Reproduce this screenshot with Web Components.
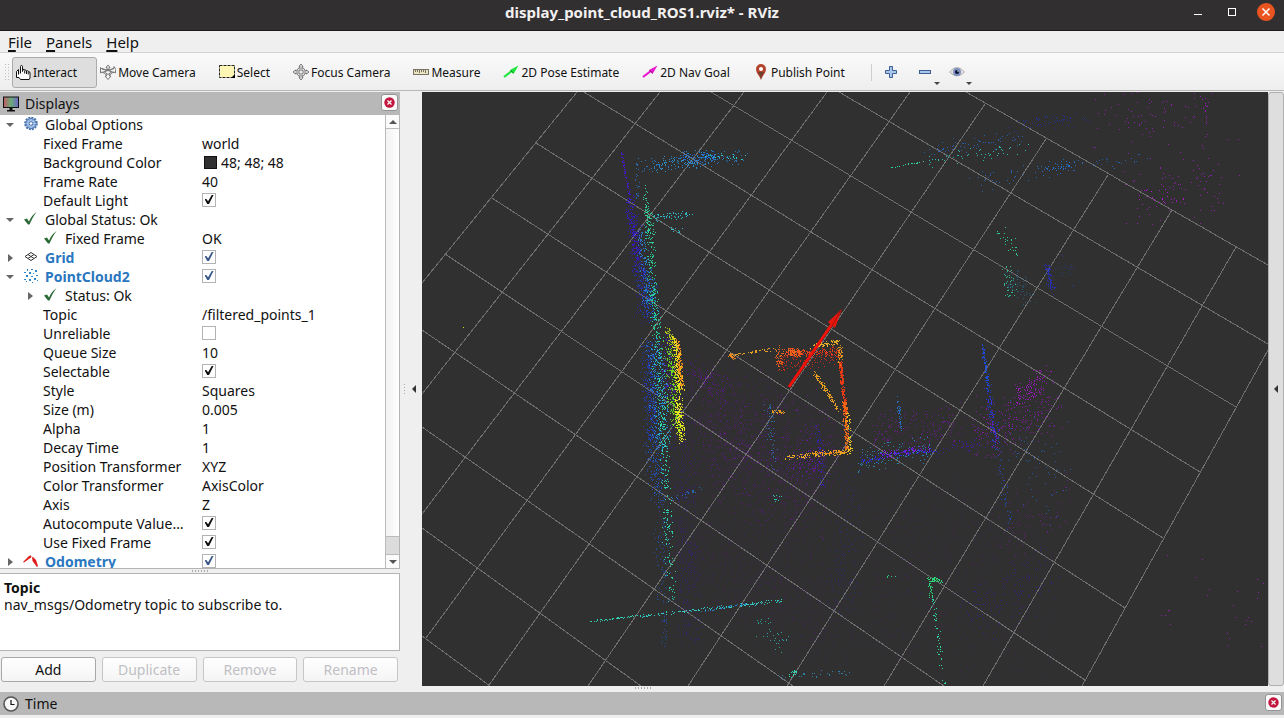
<!DOCTYPE html>
<html lang="en">
<head>
<meta charset="utf-8">
<title>display_point_cloud_ROS1.rviz* - RViz</title>
<style>
  html, body { height: 100%; margin: 0; }
  body {
    font-family: "Noto Sans", "Open Sans", sans-serif;
    font-size: 14px;
    color: #111;
    background: #efefef;
    overflow: hidden;
  }
</style>
</head>
<body>
<rviz-window></rviz-window>

<script>
const ICONS = {
  interact: `<path d="M5.500 9.500V2.500q0-1 1-1t1 1v5l.5-2q1.500-.6 1.700.6q1.600-.4 1.800.6q1.500-.2 1.700.8q2 0 1.800 1.500v5l-.8 1.500H5.500L4 13.500H1.500v-6l2-2v5" fill="#fff" stroke="#111"/><path d="M9.700 6.500v3M11.500 7v3M13.200 8v2.500" stroke="#111"/>`,
  move: `<path d="M8 1l2 2.500H9V6.500L14 4v-1.500l1.700 3L15.500 9 14 8 11 9.500l-.5 1H9.500V12H11l-3 3.500L5 12h1.500v-1.500H5.500L4.500 9.500 2 8 .5 9V3.500L2 5l5 1.500V3.500H6z" fill="#f4f4f4" stroke="#777"/><path d="M4.500 8L8 5l3.500 3L8 10.500zM2 4.500l12 4M14 4.500L2 8.500" fill="none" stroke="#777"/>`,
  select: `<rect x=".5" y="1.500" width="15" height="12" fill="#fdf6b4"/><path d="M.5 1.500h15v12H.5z" stroke="#222" stroke-dasharray="3 1"/><path d="M16 10v4h-4z" fill="#000"/>`,
  focus: `<circle cx="8" cy="8" r="4.500" fill="#eee" stroke="#777"/><path d="M8 0L10 2.500H9v4.500h4.500V6l2.500 2-2.500 2V9H9v4.500h1L8 16l-2-2.500h1V9H2.500v1L0 8l2.500-2v1H7V2.500H6z" fill="#eee" stroke="#777"/>`,
  measure: `<rect x=".5" y="5.500" width="15" height="5" fill="#e8e4c0" stroke="#777364"/><path d="M2.500 6v2M4.500 6v2M6.500 6v3M8.500 6v2M10.500 6v2M12.500 6v3" stroke="#777364"/>`,
  pose: `<path d="M1 13l8.500-6.500" stroke="#1de63c" stroke-width="2.200"/><path d="M7 6L15.500 1.500 10.500 10z" fill="#1de63c"/><path d="M7.500 6.500l3 2.500" stroke="#0a7a1a"/>`,
  goal: `<path d="M1 13l8.500-6.500" stroke="#ea16cf" stroke-width="2.200"/><path d="M7 6L15.500 1.500 10.500 10z" fill="#ea16cf"/><path d="M7.500 6.500l3 2.500" stroke="#8b0d7a"/>`,
  publish: `<path d="M8 16C7 12 3 9.500 3 5a5 5 0 0 1 10 0c0 4.500-4 7-5 11z" fill="#b5442f"/><path d="M8 16c-.3-4-2-6-3-8h6c-1 2-2.700 4-3 8z" fill="#70402f"/><circle cx="8" cy="5" r="2" fill="#fff"/>`,
  plus: `<path d="M6.500 2.500h3v4h4v3h-4v4h-3v-4h-4v-3h4z" fill="#a9c7ec" stroke="#3b5f95"/>`,
  minus: `<rect x="2.500" y="6.500" width="11" height="3" fill="#a9c7ec" stroke="#3b5f95"/>`,
  eye: `<path d="M.5 8Q8 -1 15.500 8 8 16 .5 8z" fill="#e4e2e2" stroke="#b3afaf"/><circle cx="8" cy="8" r="4" fill="#7c8fc0"/><circle cx="8" cy="8" r="2" fill="#0a1230"/><circle cx="9" cy="7" r=".8" fill="#e4ecff"/>`,
  monitor: `<defs><linearGradient id="m"><stop offset="0" stop-color="#c35b66"/><stop offset=".5" stop-color="#69ad78"/><stop offset="1" stop-color="#6e63c9"/></linearGradient></defs><rect x=".5" y="1" width="15" height="10.500" fill="url(#m)" stroke="#111"/><path d="M6.500 12h3v2h2.500v1.500H4V14h2.500z" fill="#111"/>`,
  clock: `<circle cx="8" cy="8" r="7" fill="#f8f8f8" stroke="#555" stroke-width="1.600"/><path d="M8 4v4.500h3.500" fill="none" stroke="#111" stroke-width="1.200"/>`,
  gear: `<circle cx="8" cy="7.500" r="5.800" fill="none" stroke="#4a74ae" stroke-width="2" stroke-dasharray="2 1"/><circle cx="8" cy="7.500" r="5" fill="#8fb2e0" stroke="#4a74ae"/><path d="M8 3v9M3.500 7.500h9M5 4.500l6 6M11 4.500l-6 6" stroke="#c9dcf5" stroke-width=".7"/><circle cx="8" cy="7.500" r="1.800" fill="#fff" stroke="#4a74ae"/>`,
  ok: `<path d="M1 8.500l3-1 2 3C8 6 10 3.500 13.500 1 10.500 5 8.500 9 6.500 13.500H5z" fill="#2b6a35"/>`,
  grid: `<path d="M8 3.500l6 4-6 4-6-4zM5 5.500l6 4M11 5.500l-6 4" fill="none" stroke="#333"/>`,
  cloud: `<g fill="#2f86cc"><path d="M4 1h1v2H4zM8 1h2v1H8zM12 2h2v2h-2zM1 4h2v1H1zM6 4h2v2H6zM10 5h1v1h-1zM3 7h2v2H3zM8 8h2v1H8zM13 7h2v1h-2zM1 11h2v1H1zM6 11h2v2H6zM11 10h2v2h-2zM14 12h1v1h-1zM9 14h1v1H9zM3 13h1v1H3z"/></g>`,
  odom: `<path d="M0 9l6-6 3-1-1 2.500-7 5z" fill="#de1a1a"/><path d="M9 3l4 4 2 6-1 1-4.500-6z" fill="#de1a1a"/><path d="M8 2l2 2" stroke="#fff"/>`
};

function icon(name) {
  return `<svg width="16" height="16" viewBox="0 0 16 16" fill="none" aria-hidden="true">${ICONS[name] || ''}</svg>`;
}

class TitleBar extends HTMLElement {
  connectedCallback() {
    this.attachShadow({ mode: 'open' });
    this.shadowRoot.innerHTML = `
      <style>
        :host {
          display: grid;
          grid-template-columns: 1fr auto 1fr;
          align-items: center;
          height: 24px;
          padding: 0 9px 6px;
          background: #322f30;
          border-bottom: 1px solid #1c1a1b;
          color: #f2f1f0;
          font-size: 15px;
          line-height: 24px;
          font-weight: 700;
        }
        .buttons { grid-column: 3; display: flex; justify-content: flex-end; align-items: center; gap: 16px; }
        button { width: 18px; height: 18px; padding: 0; border: 0; background: none; }
        .close { border-radius: 50%; background: #e95420; }
        svg { display: block; }
        .title { grid-column: 2; }
      </style>
      <div class="title"><slot></slot></div>
      <div class="buttons">
        <button aria-label="Minimize"><svg width="18" height="18"><path d="M5 11.500h8" stroke="#fff"/></svg></button>
        <button aria-label="Maximize"><svg width="18" height="18"><rect x="5.500" y="5.500" width="7" height="7" fill="none" stroke="#fff"/></svg></button>
        <button class="close" aria-label="Close"><svg width="18" height="18"><path d="M5.500 5.500l7 7M12.500 5.500l-7 7" stroke="#fff" stroke-width="1.500"/></svg></button>
      </div>
    `;
  }
}
customElements.define('title-bar', TitleBar);

class MenuBar extends HTMLElement {
  connectedCallback() {
    this.attachShadow({ mode: 'open' });
    this.shadowRoot.innerHTML = `
      <style>
        :host { display: flex; height: 21px; padding: 0 1px; border-bottom: 1px solid #d2d2d2; background: #efefef; font-size: 15px; }
        button { border: 0; background: none; padding: 0 7px; font: inherit; line-height: 20px; color: inherit; }
        u { text-decoration-thickness: 2px; text-underline-offset: 2px; }
      </style>
      <button><u>F</u>ile</button>
      <button><u>P</u>anels</button>
      <button><u>H</u>elp</button>
    `;
  }
}
customElements.define('menu-bar', MenuBar);

class ToolButton extends HTMLElement {
  connectedCallback() {
    const label = this.getAttribute('label');
    this.attachShadow({ mode: 'open' });
    this.shadowRoot.innerHTML = `
      <style>
        :host { display: block; }
        button {
          display: flex;
          align-items: center;
          gap: 2px;
          height: 31px;
          padding: 0 19px 0 2px;
          border: 1px solid transparent;
          border-radius: 3px;
          background: none;
          font: inherit;
          color: inherit;
          white-space: nowrap;
        }
        :host([active]) button { background: #dedede; border-color: #ababab; }
        :host([label]) button { padding: 0 8px; }
        :host([menu]) button { padding-right: 5px; }
        .menu {
          align-self: flex-end;
          width: 0;
          height: 0;
          margin: 0 -6px 2px -1px;
          border: 3px solid transparent;
          border-top-color: #444;
          border-bottom: 0;
        }
      </style>
      <button ${label ? `aria-label="${label}"` : ''}>
        ${icon(this.getAttribute('icon'))}<slot></slot>${this.hasAttribute('menu') ? '<span class="menu"></span>' : ''}
      </button>
    `;
  }
}
customElements.define('tool-button', ToolButton);

class ToolBar extends HTMLElement {
  connectedCallback() {
    this.attachShadow({ mode: 'open' });
    this.shadowRoot.innerHTML = `
      <style>
        :host {
          display: flex;
          align-items: center;
          height: 36px;
          padding: 1px 4px 0;
          background: linear-gradient(#fafafa, #eeeeee);
          border-bottom: 1px solid #b6b8b6;
          margin-bottom: 1px;
          font-size: 12px;
        }
        .grip { width: 6px; height: 18px; margin-right: 2px; background: radial-gradient(circle, #bbb 1px, transparent 1px) 0 0 / 3px 3px; }
        .line { width: 1px; height: 17px; margin: 0 2px 0 6px; background: #cfcfcf; }
      </style>
      <span class="grip"></span>
      <tool-button icon="interact" active>Interact</tool-button>
      <tool-button icon="move">Move Camera</tool-button>
      <tool-button icon="select">Select</tool-button>
      <tool-button icon="focus">Focus Camera</tool-button>
      <tool-button icon="measure">Measure</tool-button>
      <tool-button icon="pose">2D Pose Estimate</tool-button>
      <tool-button icon="goal">2D Nav Goal</tool-button>
      <tool-button icon="publish">Publish Point</tool-button>
      <span class="line"></span>
      <tool-button icon="plus" label="Add tool"></tool-button>
      <tool-button icon="minus" label="Remove tool" menu></tool-button>
      <tool-button icon="eye" label="Tool visibility" menu></tool-button>
    `;
  }
}
customElements.define('tool-bar', ToolBar);

class DockHeader extends HTMLElement {
  connectedCallback() {
    this.attachShadow({ mode: 'open' });
    this.shadowRoot.innerHTML = `
      <style>
        :host { display: flex; align-items: center; gap: 6px; height: 23px; padding: 0 2px 0 3px; background: #b8b8b8; box-sizing: border-box; flex: none; }
        .text { flex: 1; line-height: 22px; }
        button { width: 17px; height: 17px; padding: 0; margin-bottom: 2px; border: 1px solid #949494; border-radius: 3px; background: #fafafa; }
        button svg { display: block; margin: auto; }
      </style>
      ${icon(this.getAttribute('icon'))}
      <span class="text"><slot></slot></span>
      <button aria-label="Close panel">
        <svg width="11" height="11" viewBox="0 0 11 11"><circle cx="5.500" cy="5.500" r="5.200" fill="#c3163c"/><path d="M3.500 3.500l4 4M7.500 3.500l-4 4" stroke="#fff" stroke-width="1.300"/></svg>
      </button>
    `;
  }
}
customElements.define('dock-header', DockHeader);

class PropRow extends HTMLElement {
  connectedCallback() {
    const get = (name) => this.getAttribute(name);
    const arrow = get('arrow') ? `<i class="${get('arrow')}"></i>` : '';
    const checked = this.hasAttribute('checked');
    const isCheck = checked || this.hasAttribute('unchecked');
    let value = '';
    if (isCheck) value = `<input id="v" type="checkbox" ${checked ? 'checked' : ''}>`;
    else if (get('value')) value = `${get('color') ? `<b style="background:${get('color')}"></b>` : ''}<span>${get('value')}</span>`;
    this.attachShadow({ mode: 'open' });
    this.shadowRoot.innerHTML = `
      <style>
        :host { display: flex; height: 19px; line-height: 19px; }
        .name { display: flex; width: 199px; box-sizing: border-box; padding-right: 4px; }
        :host([indent]) .name { padding-left: 20px; }
        .arrow { display: flex; align-items: center; justify-content: center; width: 20px; margin-right: 3px; flex: none; }
        i { width: 0; height: 0; border: 4px solid transparent; }
        i.open { border-top-color: #666; border-bottom: 0; }
        i.closed { border-left: 5px solid #666; border-right: 0; }
        svg { flex: none; margin: 1px 6px 0 0; }
        label { white-space: nowrap; }
        :host([display]) label { color: #2a77c0; font-weight: 700; }
        .value { display: flex; align-items: center; gap: 4px; padding-left: 3px; }
        b { width: 11px; height: 11px; margin-left: 2px; border: 1px solid #111; }
        input { appearance: none; display: grid; place-items: center; width: 14px; height: 14px; margin: 0 0 2px; border: 1px solid #b3b3b3; background: #fff; color: #111; }
        :host([display]) input { color: #3a5a8c; }
        input:checked::before {
          content: "";
          width: 9px;
          height: 9px;
          background: currentColor;
          clip-path: polygon(0 45%, 20% 45%, 40% 70%, 80% 0, 100% 0, 50% 100%, 30% 100%);
        }
      </style>
      <div class="name">
        <span class="arrow">${arrow}</span>
        ${get('icon') ? icon(get('icon')) : ''}
        <label ${isCheck ? 'for="v"' : ''}><slot></slot></label>
      </div>
      <div class="value">${value}</div>
    `;
  }
}
customElements.define('prop-row', PropRow);

class ScrollBar extends HTMLElement {
  connectedCallback() {
    this.attachShadow({ mode: 'open' });
    this.shadowRoot.innerHTML = `
      <style>
        :host { display: flex; flex-direction: column; width: 13px; border-left: 1px solid #bbb; background: #dcdcdc; }
        button { display: grid; place-items: center; height: 14px; padding: 0; border: 0; background: #fbfbfb; }
        button::before { content: ""; border: 4px solid transparent; }
        .up { border-bottom: 1px solid #bbb; }
        .up::before { border-bottom-color: #555; border-top: 0; }
        .down { border-top: 1px solid #bbb; }
        .down::before { border-top-color: #555; border-bottom: 0; }
        .track { flex: 1; }
        .thumb { height: 96%; background: linear-gradient(90deg, #f2f2f2, #ffffff); border-bottom: 1px solid #bbb; box-sizing: border-box; }
      </style>
      <button class="up" aria-label="Scroll up"></button>
      <div class="track"><div class="thumb"></div></div>
      <button class="down" aria-label="Scroll down"></button>
    `;
  }
}
customElements.define('scroll-bar', ScrollBar);

class DisplaysPanel extends HTMLElement {
  connectedCallback() {
    this.attachShadow({ mode: 'open' });
    this.shadowRoot.innerHTML = `
      <style>
        :host { display: flex; flex-direction: column; }
        .tree { display: flex; flex: 1; min-height: 0; background: #fff; border: 1px solid #b4b4b4; border-width: 0 1px 1px 0; }
        .rows { flex: 1; overflow: hidden; min-width: 0; }
        .handle { height: 4px; width: 18px; margin: 0 auto; background: radial-gradient(circle, #aaa 1px, transparent 1px) 0 0 / 3px 4px; }
        .help { padding: 5px 4px 0 4px; line-height: 17px; background: #fff; border: 1px solid #b4b4b4; border-left: 0; height: 71px; }
        .actions { display: flex; gap: 6px; padding: 6px 2px 10px 1px; }
        .actions button { flex: 1; height: 25px; padding: 0; border: 1px solid #a8a8a8; border-radius: 3px; background: linear-gradient(#ffffff, #f4f4f4); font: inherit; color: #111; }
        .actions button:disabled { color: #c0bfc4; border-color: #c6c6c6; }
      </style>
      <dock-header icon="monitor">Displays</dock-header>
      <div class="tree">
        <div class="rows">
          <prop-row arrow="open" icon="gear">Global Options</prop-row>
          <prop-row indent value="world">Fixed Frame</prop-row>
          <prop-row indent value="48; 48; 48" color="#303030">Background Color</prop-row>
          <prop-row indent value="40">Frame Rate</prop-row>
          <prop-row indent checked>Default Light</prop-row>
          <prop-row arrow="open" icon="ok">Global Status: Ok</prop-row>
          <prop-row indent icon="ok" value="OK">Fixed Frame</prop-row>
          <prop-row arrow="closed" icon="grid" display checked>Grid</prop-row>
          <prop-row arrow="open" icon="cloud" display checked>PointCloud2</prop-row>
          <prop-row indent arrow="closed" icon="ok">Status: Ok</prop-row>
          <prop-row indent value="/filtered_points_1">Topic</prop-row>
          <prop-row indent unchecked>Unreliable</prop-row>
          <prop-row indent value="10">Queue Size</prop-row>
          <prop-row indent checked>Selectable</prop-row>
          <prop-row indent value="Squares">Style</prop-row>
          <prop-row indent value="0.005">Size (m)</prop-row>
          <prop-row indent value="1">Alpha</prop-row>
          <prop-row indent value="1">Decay Time</prop-row>
          <prop-row indent value="XYZ">Position Transformer</prop-row>
          <prop-row indent value="AxisColor">Color Transformer</prop-row>
          <prop-row indent value="Z">Axis</prop-row>
          <prop-row indent checked>Autocompute Value…</prop-row>
          <prop-row indent checked>Use Fixed Frame</prop-row>
          <prop-row arrow="closed" icon="odom" display checked>Odometry</prop-row>
        </div>
        <scroll-bar></scroll-bar>
      </div>
      <div class="handle"></div>
      <div class="help"><strong>Topic</strong><br>nav_msgs/Odometry topic to subscribe to.</div>
      <div class="actions">
        <button>Add</button>
        <button disabled>Duplicate</button>
        <button disabled>Remove</button>
        <button disabled>Rename</button>
      </div>
    `;
  }
}
customElements.define('displays-panel', DisplaysPanel);

// Ground grid, one segment per line, in scene units
const GRID = [
  [966, 92, 1268, 265], [839, 92, 1268, 344], [711, 92, 1236, 407], [584, 92, 1200, 472],
  [536, 143, 1163, 538], [492, 198, 1125, 608], [445, 254, 1085, 680], [422, 330, 944, 686],
  [422, 427, 793, 686], [422, 528, 641, 686], [422, 636, 490, 686],
  [577, 92, 422, 283], [660, 92, 422, 394], [744, 92, 422, 514], [827, 92, 426, 638],
  [910, 92, 489, 685], [985, 104, 588, 686], [1046, 139, 688, 686], [1108, 175, 787, 686],
  [1172, 210, 884, 686], [1236, 247, 983, 686], [1268, 350, 1082, 686]
];

// Scan strips: x1, y1, x2, y2, spread x, spread y, count, colour, opacity
const STRIPS = [
  // floor
  [690, 390, 840, 450, 20, 60, 1000, '#6a10a0', .3],
  [700, 440, 820, 500, 40, 60, 1200, '#6a10a0', .32],
  [690, 540, 830, 620, 40, 80, 1100, '#5a1488', .3],
  [860, 500, 1050, 560, 40, 80, 600, '#5a1488', .3],
  [820, 600, 1040, 620, 40, 80, 700, '#5a1488', .3],
  [680, 410, 690, 640, 16, 20, 600, '#3a18b8', .38],
  [850, 480, 840, 600, 18, 30, 160, '#2030d0', .4],
  [700, 430, 830, 440, 20, 50, 170, '#7a12b8', .7],
  [690, 370, 730, 390, 14, 16, 110, '#7010b0', .65],
  [700, 460, 820, 520, 20, 60, 120, '#7a12b8', .55],
  // left wall
  [621, 152, 630, 200, 1, 4, 60, '#4a16d8', .9],
  [628, 195, 640, 275, 6, 8, 200, '#3a14d8', .85],
  [633, 215, 644, 320, 10, 10, 200, '#2a20d8', .55],
  [636, 165, 638, 200, 3, 4, 24, '#2a70c8', .8],
  [644, 180, 648, 235, 3, 6, 44, '#34d8a4', .95],
  [648, 205, 653, 300, 6, 8, 160, '#2fdca0', .9],
  [641, 230, 648, 310, 6, 8, 150, '#2a8ce0', .8],
  [644, 270, 652, 318, 12, 10, 170, '#1c50e0', .8],
  [652, 290, 658, 345, 6, 8, 120, '#28dca8', .9],
  [648, 345, 652, 440, 10, 14, 380, '#1c40d8', .7],
  [656, 345, 662, 450, 12, 12, 320, '#2890e0', .85],
  [658, 345, 664, 450, 8, 10, 160, '#2ee0b0', .95],
  [652, 440, 658, 500, 11, 12, 150, '#2058d8', .75],
  [663, 440, 668, 530, 6, 12, 100, '#30e0c0', .9],
  [660, 500, 664, 600, 10, 20, 110, '#2058c8', .65],
  [666, 520, 672, 600, 6, 10, 70, '#30dcb8', .9],
  [666, 340, 672, 400, 10, 14, 180, '#4a18c8', .7],
  [664, 610, 664, 650, 3, 4, 26, '#2058c8', .7],
  [672, 498, 700, 488, 6, 3, 26, '#2478d8', .8],
  // upper branch
  [637, 166, 745, 156, 3, 8, 120, '#2a84dc', .8],
  [655, 164, 715, 156, 4, 10, 120, '#2aa0e0', .8],
  [680, 158, 715, 155, 10, 8, 70, '#2470e0', .9],
  [705, 156, 746, 157, 4, 4, 22, '#2cc8d0', .95],
  [652, 218, 690, 214, 3, 4, 60, '#2cc8d8', .9],
  [670, 229, 680, 229, 3, 3, 12, '#2cc8d8', .9],
  // yellow and green face
  [668, 328, 672, 345, 5, 4, 60, '#b8d020', .9],
  [668, 345, 675, 395, 7, 8, 150, '#6ee018', .95],
  [674, 338, 680, 392, 5, 6, 220, '#f4e020', .95],
  [678, 340, 681, 385, 3, 5, 130, '#f4901c', .95],
  [671, 395, 678, 430, 7, 6, 110, '#7ae81c', .9],
  [677, 395, 682, 440, 5, 6, 190, '#f0f020', .95],
  // robot outline
  [730, 354, 733, 357, 3, 3, 30, '#f08a20', 1],
  [732, 354, 780, 348, 1, 2, 50, '#f0a428', .95],
  [777, 349, 780, 366, 4, 5, 56, '#f06a20', .9],
  [785, 352, 840, 352, 5, 5, 170, '#f0401c', .95],
  [785, 352, 800, 352, 6, 5, 100, '#f0641c', 1],
  [778, 363, 838, 356, 6, 12, 130, '#d82a14', .85],
  [812, 346, 839, 341, 3, 3, 80, '#f0b428', .95],
  [839, 343, 840, 365, 3, 3, 60, '#f0a020', .9],
  [840, 362, 845, 412, 2, 4, 200, '#f03c14', .95],
  [844, 400, 847, 450, 3, 4, 190, '#f06a18', .95],
  [847, 412, 850, 452, 3, 3, 60, '#f4d028', .95],
  [814, 373, 839, 410, 2, 3, 120, '#f0a420', .95],
  [785, 457, 849, 451, 2, 3, 120, '#f4b424', .95],
  [810, 453, 849, 451, 2, 2, 80, '#f09020', .95],
  [770, 411, 783, 412, 2, 2, 30, '#f09a20', .95],
  [768, 404, 774, 470, 5, 6, 60, '#2a80c0', .75],
  [818, 428, 822, 490, 4, 8, 70, '#3320d8', .7],
  [792, 470, 818, 455, 14, 20, 80, '#7414c0', .7],
  [774, 495, 780, 500, 4, 5, 10, '#2cd0b8', .9],
  // lower lines
  [590, 621, 640, 615, 2, 1, 46, '#30d8b8', .95],
  [640, 616, 782, 600, 2, 2, 130, '#34d4c8', .95],
  [700, 610, 745, 604, 4, 2, 40, '#2a90e0', .8],
  [755, 620, 785, 640, 8, 18, 34, '#2cc0b0', .8],
  [780, 676, 850, 672, 6, 4, 34, '#2c98c8', .75],
  [789, 675, 795, 672, 3, 3, 16, '#30dcb0', 1],
  // right of the robot
  [897, 398, 901, 430, 2, 3, 40, '#2478d8', .85],
  [856, 462, 930, 448, 4, 16, 120, '#2898cc', .8],
  [858, 460, 935, 449, 4, 5, 90, '#3028f0', .9],
  [880, 455, 930, 448, 4, 5, 70, '#8018f0', .9],
  [875, 435, 960, 425, 8, 26, 180, '#8414b4', .7],
  [975, 432, 1058, 405, 8, 36, 260, '#9c14c4', .75],
  [1015, 400, 1045, 375, 9, 14, 110, '#a814d0', .85],
  [935, 450, 1000, 440, 8, 8, 60, '#4818c8', .7],
  [982, 346, 988, 390, 2, 4, 90, '#1c50f0', .9],
  [987, 385, 996, 440, 5, 6, 90, '#2038f0', .85],
  [995, 440, 1010, 525, 5, 8, 60, '#2050d8', .75],
  [1010, 440, 1060, 480, 14, 60, 70, '#2464c0', .75],
  [1000, 540, 1064, 500, 20, 36, 70, '#8018a8', .7],
  [970, 610, 1048, 575, 20, 36, 110, '#3820c0', .65],
  [880, 576, 900, 576, 2, 1, 5, '#2cdc88', .9],
  [926, 578, 942, 580, 3, 3, 40, '#2ce07c', .95],
  [929, 578, 931, 595, 3, 3, 34, '#2ce07c', .95],
  [932, 598, 940, 650, 3, 5, 36, '#30e0b0', .95],
  [938, 645, 944, 686, 3, 4, 18, '#30e0a0', .95],
  // far wall
  [887, 168, 925, 161, 1, 1, 18, '#34dca4', .95],
  [925, 160, 1030, 148, 8, 8, 56, '#2cc8b8', .9],
  [925, 150, 1020, 138, 8, 9, 70, '#2464c8', .85],
  [1020, 125, 1080, 118, 20, 9, 60, '#2034b0', .8],
  [975, 180, 1080, 165, 8, 12, 56, '#2a6cc8', .85],
  [1040, 168, 1072, 165, 8, 5, 36, '#2478e0', .9],
  [1090, 165, 1145, 158, 14, 8, 24, '#2464b8', .85],
  [1095, 120, 1205, 105, 20, 36, 80, '#9a1cc0', .85],
  [1130, 190, 1225, 175, 20, 46, 90, '#a01cc4', .85],
  [1148, 196, 1175, 196, 18, 10, 24, '#b814d8', .95],
  [1205, 95, 1206, 123, 1, 2, 10, '#a014c8', .9],
  [998, 230, 1014, 250, 8, 10, 28, '#30d890', .9],
  [1006, 265, 1010, 295, 7, 8, 40, '#30d09c', .85],
  [1010, 280, 1030, 295, 9, 18, 60, '#2470a0', .65],
  [1046, 262, 1052, 290, 4, 6, 70, '#2430d8', .8],
  [1056, 270, 1074, 270, 8, 20, 40, '#2440a0', .5],
  [1150, 620, 1268, 600, 24, 70, 26, '#9a1cc0', .85],
  [463, 327, 463, 327, 0, 0, 1, '#d8d820', 1]
];

class PointView extends HTMLElement {
  connectedCallback() {
    let seed = 20;
    const rand = () => {
      seed = (seed * 1664525 + 1013904223) % 4294967296;
      return seed / 4294967296;
    };
    const lines = GRID.map(([x1, y1, x2, y2]) => `M${x1} ${y1}L${x2} ${y2}`).join('');
    const points = STRIPS.map(([x1, y1, x2, y2, sx, sy, count, color, opacity]) => {
      let d = '';
      for (let i = 0; i < count; i++) {
        const t = rand();
        const x = Math.round(x1 + (x2 - x1) * t + (rand() + rand() - 1) * sx);
        const y = Math.round(y1 + (y2 - y1) * t + (rand() + rand() - 1) * sy);
        d += `M${x} ${y}h1v1h-1z`;
      }
      return `<path d="${d}" fill="${color}" fill-opacity="${opacity}"/>`;
    }).join('');
    this.attachShadow({ mode: 'open' });
    this.shadowRoot.innerHTML = `
      <style>
        :host { display: block; background: #303030; overflow: hidden; min-height: 0; }
        svg { display: block; width: 100%; height: 100%; }
      </style>
      <svg viewBox="422 92 846 594" preserveAspectRatio="xMidYMid slice" role="img" aria-label="3D view">
        <path d="${lines}" fill="none" stroke="#6e6e6e" shape-rendering="crispEdges"/>
        <g shape-rendering="crispEdges">${points}</g>
        <path d="M789 387L832 324" stroke="#f0120a" stroke-width="3"/>
        <path d="M828 322L842 309 835 328z" fill="#e8160c"/>
        <path d="M832 326L841 310" stroke="#a80f08"/>
      </svg>
    `;
  }
}
customElements.define('point-view', PointView);

class RvizWindow extends HTMLElement {
  connectedCallback() {
    this.attachShadow({ mode: 'open' });
    this.shadowRoot.innerHTML = `
      <style>
        :host { display: flex; flex-direction: column; height: 100vh; }
        main { display: flex; flex: 1; min-height: 0; }
        displays-panel { width: 400px; flex: none; }
        .center { flex: 1; min-width: 0; display: flex; flex-direction: column; }
        point-view { flex: 1; }
        .handle { height: 4px; width: 18px; flex: none; margin: 0 auto 2px 212px; background: radial-gradient(circle, #aaa 1px, transparent 1px) 0 0 / 3px 4px; }
        .gutter { display: flex; align-items: center; gap: 6px; width: 19px; padding: 0 0 6px 3px; flex: none; }
        .grip { width: 3px; height: 13px; background: radial-gradient(circle, #aaa 1px, transparent 1px) 0 0 / 3px 3px; }
        .fold { padding: 0; border: 0; background: none; display: grid; place-items: center; }
        .fold::before { content: ""; border: 4px solid transparent; border-right-color: #333; border-left: 0; }
        .side { width: 16px; margin-bottom: 6px; border: 1px solid #b0b0b0; border-radius: 3px; background: #dedede; }
        footer { padding-bottom: 3px; }
      </style>
      <title-bar>display_point_cloud_ROS1.rviz* - RViz</title-bar>
      <menu-bar></menu-bar>
      <tool-bar></tool-bar>
      <main>
        <displays-panel></displays-panel>
        <div class="gutter"><span class="grip"></span><button class="fold" aria-label="Hide left panel"></button></div>
        <div class="center">
          <point-view></point-view>
          <div class="handle"></div>
        </div>
        <button class="fold side" aria-label="Show right panel"></button>
      </main>
      <footer><dock-header icon="clock">Time</dock-header></footer>
    `;
  }
}
customElements.define('rviz-window', RvizWindow);
</script>
</body>
</html>
